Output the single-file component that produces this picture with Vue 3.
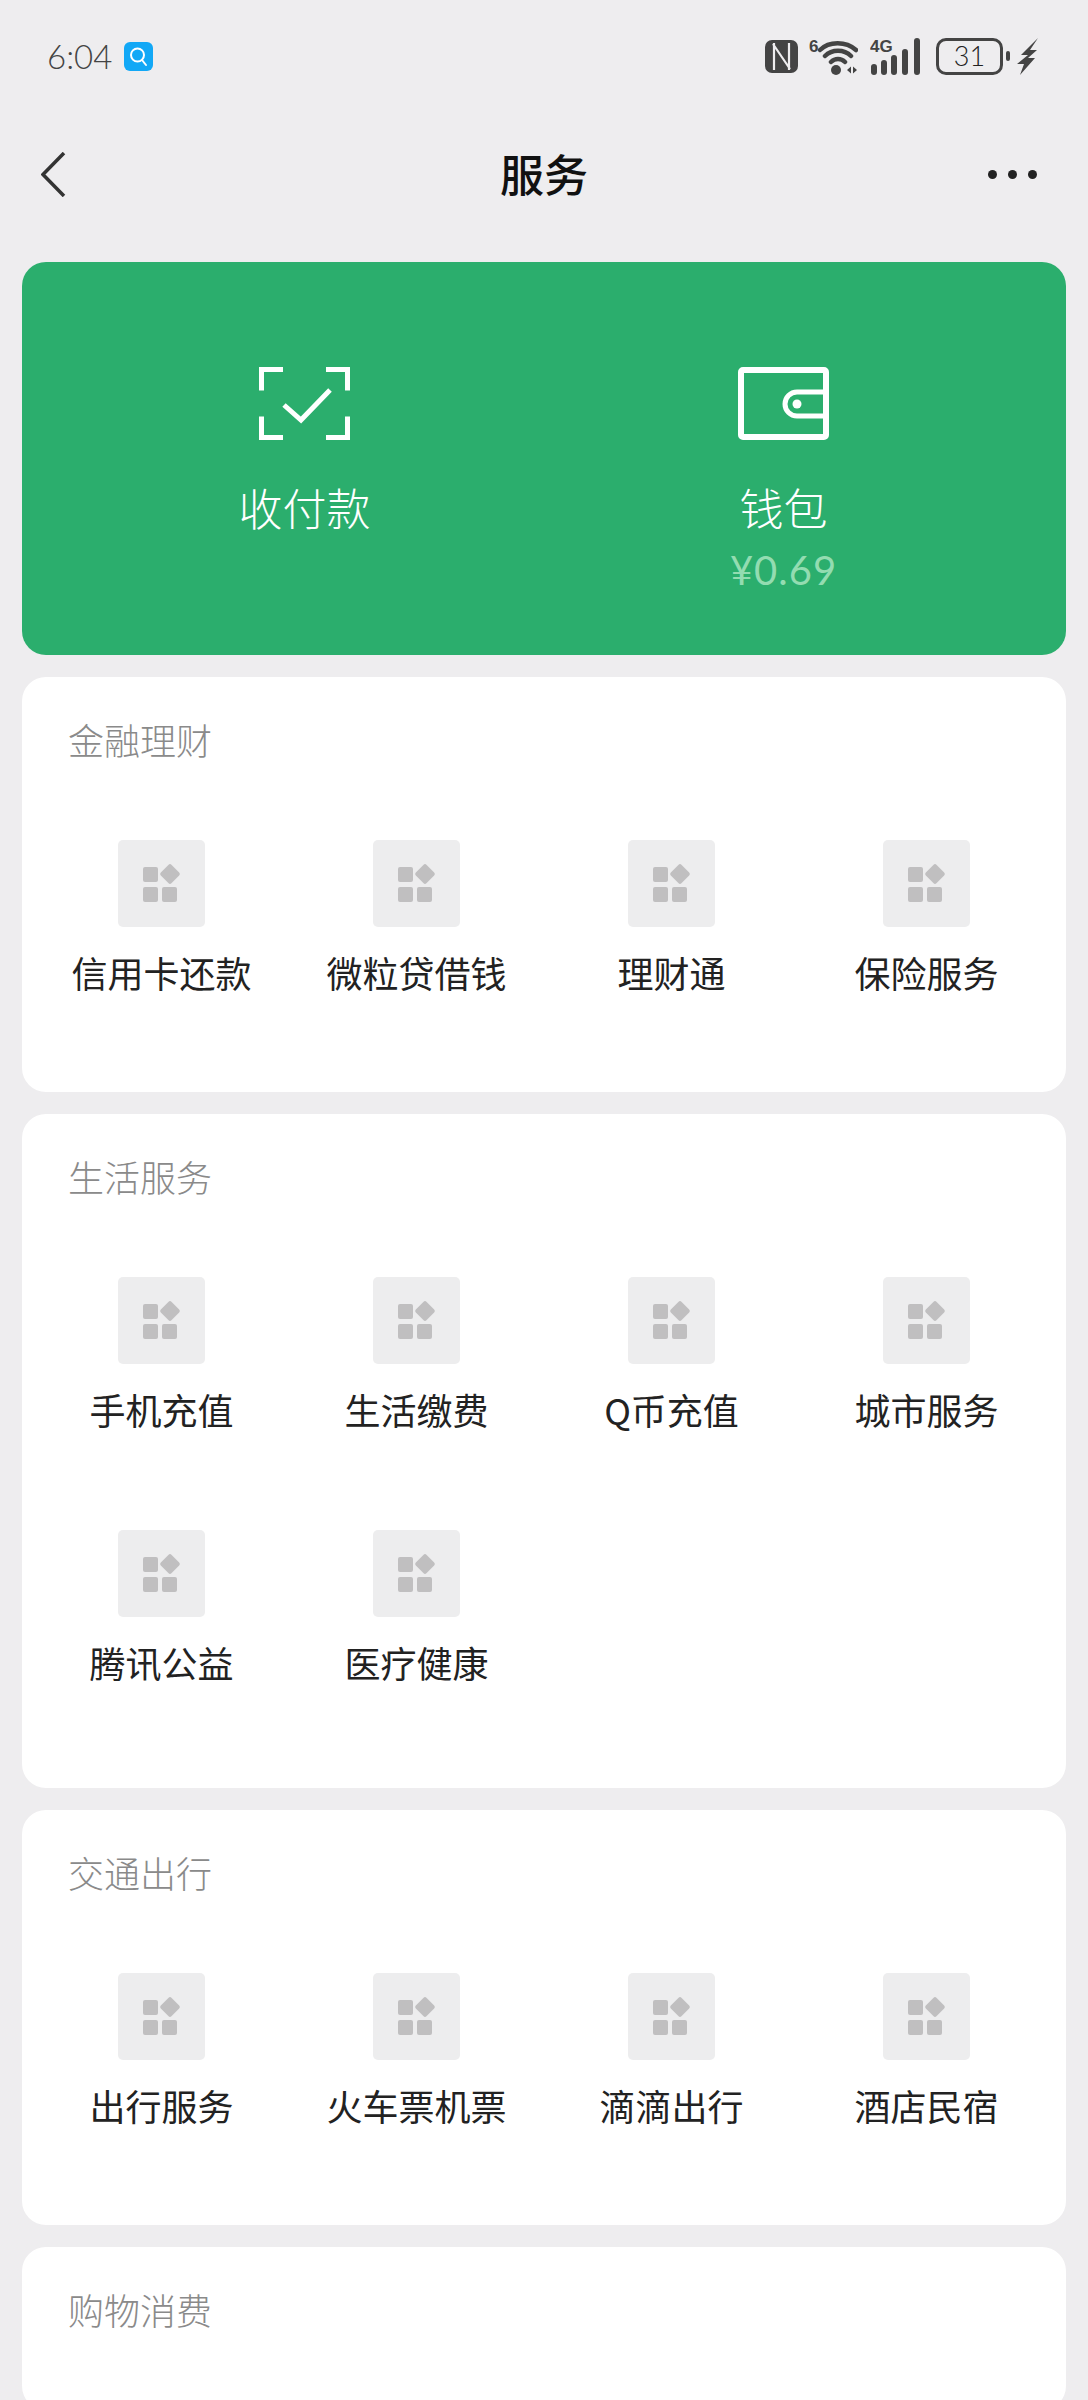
<template>
  <div class="page">
    <div class="status-bar">
      <div class="status-left">
        <span class="time">6:04</span>
        <svg class="search-app" viewBox="0 0 29 29">
          <rect width="29" height="29" rx="6" fill="#12a8f6" />
          <circle cx="13.5" cy="13" r="6.5" fill="none" stroke="#fff" stroke-width="2" />
          <path d="M18 18l4 5" stroke="#fff" stroke-width="2" stroke-linecap="round" />
        </svg>
      </div>
      <div class="status-right">
        <svg class="nfc" viewBox="0 0 33 33">
          <rect width="33" height="33" rx="7" fill="#444" />
          <path d="M9 3v27M8 4l17 25M24 3v27" fill="none" stroke="#eeedef" stroke-width="2.2" />
        </svg>
        <svg class="wifi" viewBox="0 0 49 37">
          <text x="0" y="14" class="sig-text">6</text>
          <path d="M11 12C20 3 37 3 47 12M16 18C23 11 35 11 42 18M22 24C26 20 32 20 36 24" fill="none" stroke="#444" stroke-width="4.5" stroke-linecap="round" />
          <circle cx="27" cy="32" r="5" fill="#444" />
          <path d="M38 32l4-3.500v7zM48 32l-4-3.500v7z" fill="#444" />
        </svg>
        <svg class="signal" viewBox="0 0 52 37">
          <text x="0" y="14" class="sig-text">4G</text>
          <path d="M4 29v5M14 25v9M24 20v14M35 14v20M47 3v31" stroke="#444" stroke-width="6" stroke-linecap="round" />
        </svg>
        <div class="battery">31</div>
        <span class="battery-nub"></span>
        <svg class="bolt" viewBox="0 0 22 37">
          <path d="M21 0L4 17h7L0 26h7L3 37l15-17h-7l9-8h-7z" fill="#444" />
        </svg>
      </div>
    </div>

    <div class="nav">
      <svg class="back" viewBox="0 0 25 45">
        <path d="M23 1L2 22.500 23 44" fill="none" stroke="#333" stroke-width="3.500" />
      </svg>
      <span class="nav-title">服务</span>
      <div class="dots"><i></i><i></i><i></i></div>
    </div>

    <div class="content">
      <div class="hero">
        <div class="hero-item">
          <svg class="hero-icon" viewBox="0 0 91 73">
            <path d="M24 2.500H2.500v21M67 2.500h21.500v21M2.500 49.500v21H24M88.500 49.500v21H67" fill="none" stroke="#fff" stroke-width="5" />
            <path d="M25 38l17 15 29-30" fill="none" stroke="#fff" stroke-width="5" />
          </svg>
          <div class="hero-label">收付款</div>
        </div>
        <div class="hero-item">
          <svg class="hero-icon" viewBox="0 0 91 73">
            <rect x="3" y="3" width="85" height="67" rx="2" fill="none" stroke="#fff" stroke-width="6" />
            <path d="M89 25H59a12 12 0 0 0 0 24h30" fill="none" stroke="#fff" stroke-width="5" />
            <circle cx="59" cy="37" r="4.500" fill="#fff" />
          </svg>
          <div class="hero-label">钱包</div>
          <div class="hero-money">¥0.69</div>
        </div>
      </div>

      <section v-for="sec in sections" :key="sec.title" class="card" :class="{ tall: sec.items.length > 4 }">
        <h3 class="card-title">{{ sec.title }}</h3>
        <div class="grid">
          <div v-for="name in sec.items" :key="name" class="item">
            <svg class="item-icon" viewBox="0 0 87 87">
              <rect width="87" height="87" rx="5" fill="#ededee" />
              <rect x="25" y="27" width="15" height="15" rx="2" fill="#c0bfc0" />
              <rect x="25" y="47" width="15" height="15" rx="2" fill="#c0bfc0" />
              <rect x="44" y="47" width="15" height="15" rx="2" fill="#c0bfc0" />
              <rect x="44.500" y="26.500" width="15" height="15" rx="2" fill="#c0bfc0" transform="rotate(45 52 34)" />
            </svg>
            <div class="item-label">{{ name }}</div>
          </div>
        </div>
      </section>
    </div>
  </div>
</template>

<script setup>
const sections = [
  { title: '金融理财', items: ['信用卡还款', '微粒贷借钱', '理财通', '保险服务'] },
  { title: '生活服务', items: ['手机充值', '生活缴费', 'Q币充值', '城市服务', '腾讯公益', '医疗健康'] },
  { title: '交通出行', items: ['出行服务', '火车票机票', '滴滴出行', '酒店民宿'] },
  { title: '购物消费', items: [] }
]
</script>

<style>
html, body { background: #eeedef; overflow: hidden; }
</style>

<style scoped>
.page { width: 1088px; height: 2400px; overflow: hidden; background: #eeedef; font-family: "Noto Sans CJK SC", "Noto Sans", sans-serif; color: #222; }

.status-bar { height: 112px; display: flex; justify-content: space-between; align-items: center; padding: 0 49px 0 47px; box-sizing: border-box; }
.status-left { display: flex; align-items: center; gap: 14px; }
.time { font-family: Lato, sans-serif; font-weight: 300; font-size: 33px; color: #444; line-height: 44px; width: 63px; white-space: nowrap; }
.search-app { width: 29px; height: 29px; }
.status-right { display: flex; align-items: center; }
.nfc { width: 33px; height: 33px; margin-right: 11px; }
.wifi { width: 49px; height: 37px; margin-right: 12px; }
.signal { width: 52px; height: 37px; margin-right: 14px; }
.sig-text { font-family: "Liberation Sans", sans-serif; font-size: 17px; font-weight: 700; fill: #444; }
.battery { width: 67px; height: 37px; box-sizing: border-box; border: 3px solid #444; border-radius: 10px; font-family: Lato, sans-serif; font-weight: 300; font-size: 27px; line-height: 30px; text-align: center; color: #222; }
.battery-nub { width: 4px; height: 10px; background: #444; border-radius: 2px; margin: 0 7px 0 3px; }
.bolt { width: 22px; height: 37px; }

.nav { height: 124px; display: grid; grid-template-columns: 1fr auto 1fr; align-items: center; padding: 0 46px; box-sizing: border-box; }
.back { width: 25px; height: 45px; margin-left: -5px; }
.nav-title { font-size: 44px; font-weight: 500; color: #111; line-height: 60px; margin-top: -3px; }
.dots { display: flex; gap: 11px; justify-content: flex-end; margin-right: 5px; }
.dots i { width: 9px; height: 9px; border-radius: 50%; background: #222; display: block; }

.content { padding: 26px 22px 0; display: flex; flex-direction: column; gap: 22px; }

.hero { height: 393px; background: #2bae6d; border-radius: 24px; padding: 105px 43px 0; box-sizing: border-box; display: grid; grid-template-columns: 1fr 1fr; }
.hero-item { display: flex; flex-direction: column; align-items: center; }
.hero-icon { width: 91px; height: 73px; }
.hero-label { margin-top: 37px; font-size: 44px; line-height: 60px; color: #fff; font-weight: 300; }
.hero-money { margin-top: 8px; font-family: Lato, sans-serif; font-size: 40px; line-height: 50px; color: #93dcb1; letter-spacing: 1px; }

.card { background: #fff; border-radius: 24px; min-height: 163px; padding: 0 12px; }
.card.tall { padding-bottom: 6px; }
.card-title { margin: 0; height: 163px; box-sizing: border-box; padding: 43px 0 0 34px; font-size: 36px; line-height: 38px; font-weight: 300; color: #8a8a8a; }
.grid { display: grid; grid-template-columns: repeat(4, 1fr); row-gap: 1px; }
.item { height: 252px; display: flex; flex-direction: column; align-items: center; }
.item-icon { width: 87px; height: 87px; }
.item-label { margin-top: 23px; font-size: 36px; line-height: 44px; font-weight: 400; color: #222; white-space: nowrap; }
</style>
